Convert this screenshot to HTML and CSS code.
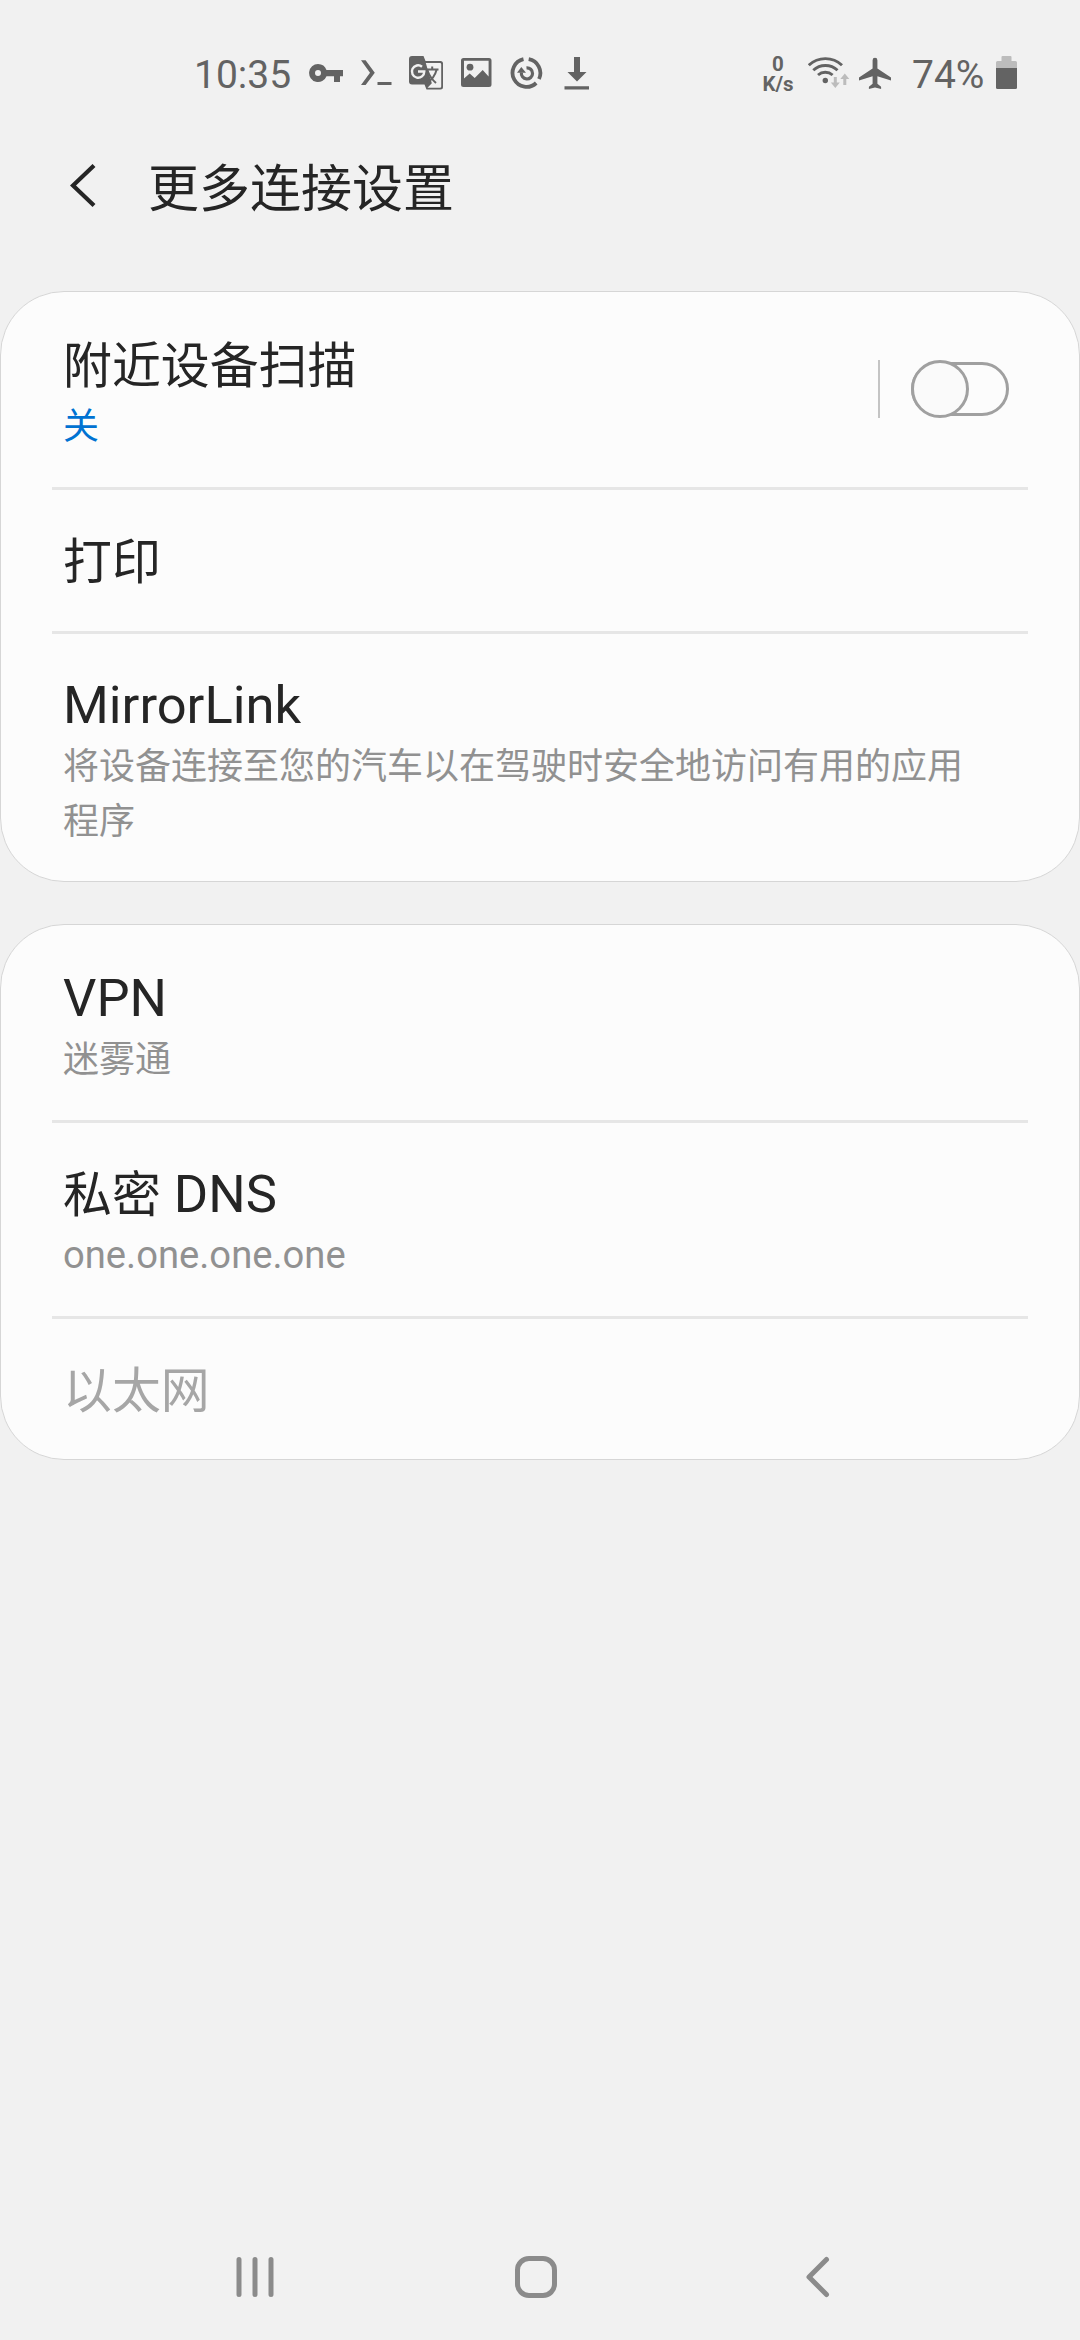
FILE: index.html
```html
<!DOCTYPE html>
<html lang="zh-CN">
<head>
<meta charset="utf-8">
<title>更多连接设置</title>
<link rel="stylesheet" href="styles.css">
</head>
<body>
<div class="screen">
  <div class="status">
    <div class="status-left">
      <span class="clock">10:35</span>
      <svg class="key" width="34" height="40" viewBox="309 53 34 40"><path fill-rule="evenodd" d="M318 64a9 9 0 0 1 8.500 6H343v6.200H340V82h-6v-5.800H326.500A9 9 0 1 1 318 64zM318 70a3 3 0 1 0 0 6 3 3 0 0 0 0-6z"/></svg>
      <svg class="term" width="32" height="40" viewBox="361 53 32 40"><path d="M361 60.300h4.600L374.800 72.700 365.600 85H361l9-12.300zM377.500 82h14v3h-14z"/></svg>
      <svg class="translate" width="34" height="40" viewBox="409 53 34 40"><path d="M412 56h11.500l2 5H440.500a2.500 2.500 0 0 1 2.500 2.500v23.500a2.500 2.500 0 0 1-2.500 2.500H426.500l-2-5H412a3 3 0 0 1-3-3V59a3 3 0 0 1 3-3z"/><path class="cut" d="M425.800 63H440a1.200 1.200 0 0 1 1.200 1.200v22.300a1.200 1.200 0 0 1-1.200 1.200H427.500l4.300-4.500z"/><path class="line" d="M426.500 69.500H438.500M432.200 66.500v3M427.500 70.500C429.500 76 432.500 80 436 83M436.500 70C435 76 431.500 80 427 82.500" stroke-width="2"/><path class="cut-line" d="M422 66.700A6.200 6.200 0 1 0 424.300 71.500H418" stroke-width="2.400"/></svg>
      <svg class="picture" width="31" height="40" viewBox="461 53 31 40"><path fill-rule="evenodd" d="M463.500 58h25.500a2.500 2.500 0 0 1 2.500 2.500v24a2.500 2.500 0 0 1-2.500 2.500h-25.500a2.500 2.500 0 0 1-2.500-2.500V60.500a2.500 2.500 0 0 1 2.500-2.500zM464 60.800v17.700l5.700-5 5 4.500 8-8 5.900 6.500V60.800z"/><circle cx="470" cy="67.200" r="3.400"/></svg>
      <svg class="sync" width="34" height="40" viewBox="509 53 34 40"><g class="line"><path d="M523.500 59.200A14 14 0 1 0 536.200 83" stroke-width="3.800"/><path d="M528.700 59.200A14 14 0 0 1 539 79" stroke-width="3.800"/><path d="M526.500 67.800A5.600 5.600 0 1 1 521.400 72.500" stroke-width="3.200"/></g><path d="M517 72.800l4.300-5.800 4.700 5.800z"/></svg>
      <svg class="download" width="26" height="40" viewBox="564 53 26 40"><path d="M574 57h6v15h6.500L577 81.500 567.500 72H574zM564.500 86.300H589v3.200H564.500z"/></svg>
    </div>
    <div class="status-right">
      <div class="speed"><span>0</span><span>K/s</span></div>
      <svg class="wifi" width="42" height="40" viewBox="808 53 42 40"><g class="line" stroke-width="2.900"><path d="M808.800 65.300a24 24 0 0 1 33.200 0M813.300 70.300a17.500 17.500 0 0 1 24.200 0M818 75a11 11 0 0 1 14.600 0"/></g><circle cx="825.300" cy="80.500" r="2.700"/><path class="faint" d="M833.800 77h3v5.500h3l-4.500 5.500-4.500-5.500h3zM843.300 85V79h-3l4.500-5.500 4.500 5.500h-3v6z"/></svg>
      <svg class="plane" width="32" height="40" viewBox="859 53 32 40"><path d="M875 57.800a2.400 2.400 0 0 1 2.400 2.400v8.300L891 77.500v3l-13.600-4.200v7.400l3.700 3v2.300L875 87.500 868.900 89v-2.300l3.700-3v-7.400L859 80.500v-3l13.600-9v-8.300A2.400 2.400 0 0 1 875 57.800z"/></svg>
      <span class="percent">74%</span>
      <svg class="battery" width="21" height="40" viewBox="996 53 21 40"><path class="faint" d="M1002.500 56h8a1 1 0 0 1 1 1v4h4a1.500 1.500 0 0 1 1.500 1.500V69H996v-6.500a1.500 1.500 0 0 1 1.500-1.500h4v-4a1 1 0 0 1 1-1z"/><path d="M996 68h21v19.500a1.500 1.500 0 0 1-1.500 1.500h-18a1.500 1.500 0 0 1-1.500-1.500z"/></svg>
    </div>
  </div>

  <div class="header">
    <svg class="back" width="26" height="44" viewBox="70 164 26 44"><path d="M94 165.500L73 185.500 94 205.500" stroke-width="4.200"/></svg>
    <h1 class="heading">更多连接设置</h1>
  </div>

  <div class="card">
    <div class="row row-switch">
      <div class="texts">
        <div class="title">附近设备扫描</div>
        <div class="sub on-blue">关</div>
      </div>
      <div class="switch-area">
        <div class="bar"></div>
        <div class="switch"><div class="thumb"></div></div>
      </div>
    </div>
    <div class="divider"></div>
    <div class="row row-single"><div class="title">打印</div></div>
    <div class="divider"></div>
    <div class="row row-mirror">
      <div class="title latin">MirrorLink</div>
      <div class="sub">将设备连接至您的汽车以在驾驶时安全地访问有用的应用程序</div>
    </div>
  </div>

  <div class="card">
    <div class="row row-vpn">
      <div class="title latin">VPN</div>
      <div class="sub">迷雾通</div>
    </div>
    <div class="divider"></div>
    <div class="row row-dns">
      <div class="title">私密<span class="latin"> DNS</span></div>
      <div class="sub latin-sub">one.one.one.one</div>
    </div>
    <div class="divider"></div>
    <div class="row row-single last"><div class="title disabled">以太网</div></div>
  </div>

  <div class="nav">
    <svg width="40" height="44" viewBox="235 2255 40 44"><path d="M239 2259.500v35M255 2259.500v35M271 2259.500v35"/></svg>
    <svg class="home" width="44" height="44" viewBox="514 2255 44 44"><rect x="517.500" y="2258.500" width="37" height="37" rx="11.500"/></svg>
    <svg class="nav-back" width="26" height="44" viewBox="805 2255 26 44"><path d="M826.500 2259.500L809 2277l17.500 17.500"/></svg>
  </div>
</div>
</body>
</html>
```

FILE: styles.css
```css
* { box-sizing: border-box; }

body {
  margin: 0;
  background: #f1f1f1;
  color: #252525;
  font-family: Roboto, "Noto Sans CJK SC", sans-serif;
}

svg { display: block; flex: none; }

.screen {
  display: flex;
  flex-direction: column;
  width: 1080px;
  height: 2340px;
}

/* Status bar */
.status {
  display: flex;
  justify-content: space-between;
  height: 93px;
  padding: 53px 63px 0 194px;
  color: #636363;
  fill: #636363;
}
.status-left, .status-right { display: flex; align-items: center; height: 40px; }
.clock, .percent { padding-top: 3px; font-size: 39px; line-height: 40px; white-space: nowrap; }
.clock { width: 115px; }
.term { margin-left: 18px; }
.translate { margin-left: 16px; }
.picture { margin-left: 18px; }
.sync { margin-left: 17px; }
.download { margin-left: 21px; }
.speed {
  display: flex;
  flex-direction: column;
  width: 34px;
  margin-right: 13px;
  padding-top: 2px;
  font-size: 20.500px;
  font-weight: 700;
  line-height: 20px;
  text-align: center;
}
.plane { margin-left: 9px; }
.percent { width: 84px; margin-left: 21px; }
.line { fill: none; stroke: #636363; }
.cut { fill: #f1f1f1; }
.cut-line { fill: none; stroke: #f1f1f1; }
.faint { fill: #bcbcbc; }

/* Page header */
.header {
  display: flex;
  align-items: center;
  gap: 52px;
  height: 198px;
  padding: 0 70px 12px;
}
.back { fill: none; stroke: #252525; }
.heading { margin: 0; padding-top: 7px; font-size: 51px; line-height: 70px; font-weight: 400; }

/* Setting groups */
.card {
  border: 1px solid #d6d6d6;
  border-radius: 64px;
  background: #fcfcfc;
}
.card + .card { margin-top: 42px; }
.row { padding: 39px 90px 0 62px; }
.row-switch, .row-vpn { height: 195px; padding-top: 41px; }
.row-switch { display: flex; justify-content: space-between; padding-top: 42px; padding-right: 70px; }
.row-single { height: 141px; padding-top: 40px; }
.row-mirror { height: 247px; }
.row-dns { height: 193px; }
.last { height: 140px; }
.divider { height: 3px; margin: 0 51px; background: #e6e6e6; }
.title { font-size: 48.900px; line-height: 65px; height: 66px; }
.latin { font-size: 52.500px; }
.sub { font-size: 36px; line-height: 55px; color: #919191; }
.row-mirror .sub, .row-vpn .sub { padding-top: 1px; }
.latin-sub { font-size: 38.200px; }
.on-blue { color: #0072d2; }
.disabled { color: #a6a6a6; }

/* Toggle */
.switch-area { display: flex; align-items: center; gap: 31px; height: 58px; margin-top: 26px; }
.bar { width: 2px; height: 58px; background: #c4c4c4; }
.switch {
  display: flex;
  align-items: center;
  width: 98px;
  height: 54px;
  border: 3px solid #a0a0a0;
  border-radius: 27px;
}
.thumb {
  flex: none;
  width: 58px;
  height: 58px;
  margin-left: -3px;
  border: 3px solid #a0a0a0;
  border-radius: 50%;
  background: #fafafa;
}

/* Navigation bar */
.nav {
  display: flex;
  margin-top: auto;
  padding: 0 249px 41px 235px;
  fill: none;
  stroke: #8b8b8b;
  stroke-width: 5px;
  stroke-linecap: round;
  stroke-linejoin: round;
}
.home { margin-left: 239px; }
.nav-back { margin-left: auto; }
```
